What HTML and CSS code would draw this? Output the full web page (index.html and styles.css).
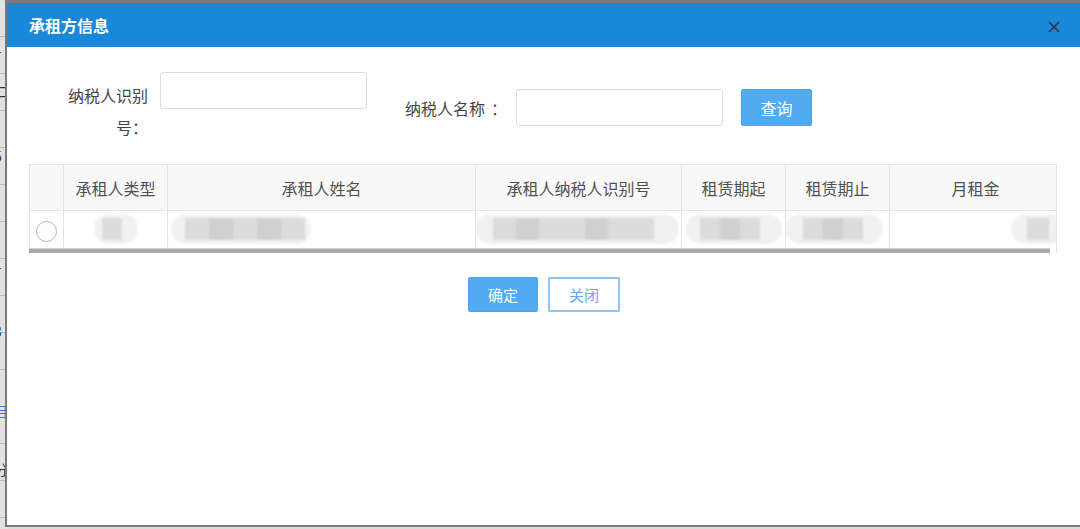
FILE: index.html
```html
<!DOCTYPE html>
<html lang="zh-CN">
<head>
    <meta charset="UTF-8">
    <title>承租方信息</title>
    <link rel="stylesheet" href="styles.css">
</head>
<body>
    <div class="backdrop">
        <span class="ghost g1">1</span>
        <span class="ghost g2">二</span>
        <span class="ghost g3">5</span>
        <span class="ghost g4">1</span>
        <span class="ghost g5">3</span>
        <span class="ghost g6 blue">目</span>
        <span class="ghost g7">分</span>
    </div>

    <div class="dialog">
        <div class="dialog-head">
            <h2>承租方信息</h2>
            <svg class="close" width="12" height="12" viewBox="0 0 12 12">
                <path d="M1 1 L11 11 M11 1 L1 11" stroke="#2b3440" stroke-width="1.6" fill="none"/>
            </svg>
        </div>

        <div class="dialog-body">
            <div class="search-row">
                <div class="field field-top">
                    <label class="lbl lbl-wrap">纳税人识别号：</label>
                    <input class="txt" type="text">
                </div>
                <div class="field field-mid">
                    <label class="lbl">纳税人名称<span class="colon">：</span></label>
                    <input class="txt" type="text">
                    <button class="btn btn-primary btn-search">查询</button>
                </div>
            </div>

            <div class="grid-wrap">
                <table class="grid">
                    <colgroup>
                        <col style="width:34px">
                        <col style="width:104px">
                        <col style="width:308px">
                        <col style="width:206px">
                        <col style="width:104px">
                        <col style="width:104px">
                        <col style="width:172px">
                    </colgroup>
                    <thead>
                        <tr>
                            <th></th>
                            <th>承租人类型</th>
                            <th>承租人姓名</th>
                            <th>承租人纳税人识别号</th>
                            <th>租赁期起</th>
                            <th>租赁期止</th>
                            <th>月租金</th>
                        </tr>
                    </thead>
                    <tbody>
                        <tr>
                            <td class="cell-radio"><span class="radio"></span></td>
                            <td><span class="mask mask-type"><i></i></span></td>
                            <td class="left"><span class="mask mask-name"><i></i><i class="d"></i><i></i><i class="d"></i><i></i></span></td>
                            <td><span class="mask mask-id"><i></i><i class="d"></i><i></i><i></i><i class="d"></i><i></i><i></i></span></td>
                            <td><span class="mask mask-date"><i></i><i class="d"></i><i></i></span></td>
                            <td><span class="mask mask-date2"><i></i><i class="d"></i><i></i></span></td>
                            <td class="right"><span class="mask mask-rent"><i></i></span></td>
                        </tr>
                    </tbody>
                </table>
                <div class="hscroll"></div>
            </div>

            <div class="actions">
                <button class="btn btn-primary">确定</button>
                <button class="btn btn-plain">关闭</button>
            </div>
        </div>
    </div>
</body>
</html>
```

FILE: styles.css
```css
* {
    box-sizing: border-box;
}

body {
    margin: 0;
    width: 1080px;
    height: 529px;
    overflow: hidden;
    background-color: #dcdcdc;
    font-family: "Noto Sans CJK SC", "Microsoft YaHei", sans-serif;
    position: relative;
}

.backdrop {
    position: absolute;
    left: 0;
    top: 0;
    width: 8px;
    height: 529px;
    background: repeating-linear-gradient(#e2e2e2 0, #e2e2e2 36px, #b9b9b9 36px, #b9b9b9 37px);
}

.ghost {
    position: absolute;
    left: -6px;
    font-size: 14px;
    line-height: 14px;
    color: #333;
}

.ghost.blue { color: #3a78c0; }
.g1 { top: 40px; }
.g2 { top: 84px; }
.g3 { top: 149px; }
.g4 { top: 256px; }
.g5 { top: 324px; }
.g6 { top: 404px; }
.g7 { top: 462px; }

.dialog {
    position: absolute;
    left: 5px;
    top: 0;
    width: 1080px;
    height: 527px;
    background-color: #fff;
    border-left: 2px solid #7a7a7a;
    border-top: 3px solid #7a7a7a;
    border-bottom: 2px solid #7a7a7a;
}

.dialog-head {
    height: 44px;
    background-color: #1a88d9;
    display: flex;
    align-items: center;
    justify-content: space-between;
    padding: 0 25px 0 22px;
}

.dialog-head h2 {
    margin: 0;
    font-size: 16px;
    font-weight: bold;
    color: #fff;
    line-height: 20px;
}

.close {
    margin-top: 4px;
}

.dialog-body {
    padding: 25px 22px 0 22px;
}

.search-row {
    display: flex;
    align-items: center;
    padding-left: 35px;
}

.field {
    display: flex;
}

.field-top {
    align-items: flex-start;
}

.field-mid {
    align-items: center;
    margin-left: 38px;
}

.lbl {
    font-size: 16px;
    line-height: 32px;
    color: #444;
    white-space: nowrap;
}

.colon {
    padding-left: 6px;
    margin-right: -6px;
}

.lbl-wrap {
    width: 84px;
    white-space: normal;
    text-align: right;
    margin-top: 7px;
}

.txt {
    width: 207px;
    height: 37px;
    margin-left: 12px;
    border: 1px solid #dcdcdc;
    border-radius: 3px;
    background: #fff;
    outline: none;
}

.field-mid .txt {
    margin-left: 15px;
}

.btn {
    height: 35px;
    width: 70px;
    border-radius: 2px;
    font-family: inherit;
    font-size: 15px;
    cursor: pointer;
    padding: 0;
}

.btn-primary {
    background-color: #52abf1;
    border: 1px solid #4aa5ee;
    color: #fff;
}

.btn-search {
    height: 37px;
    width: 71px;
    margin-left: 18px;
    font-size: 16px;
}

.btn-plain {
    width: 72px;
    background-color: #fff;
    border: 2px solid #8cc4f3;
    color: #62a8ee;
}

.grid-wrap {
    margin-top: 21px;
    width: 1028px;
    overflow: hidden;
    border-right: 1px solid #e4e4e4;
}

.grid {
    border-collapse: collapse;
    table-layout: fixed;
    width: 1032px;
}

.grid th,
.grid td {
    border: 1px solid #e4e4e4;
    padding: 0;
    text-align: center;
    overflow: hidden;
    white-space: nowrap;
}

.grid th {
    height: 46px;
    background-color: #f8f8f8;
    font-size: 16px;
    font-weight: normal;
    color: #505050;
}

.grid td {
    height: 37px;
    border-bottom: none;
}

.grid td.left {
    text-align: left;
}

.grid td.right {
    text-align: right;
}

.radio {
    display: inline-block;
    width: 21px;
    height: 21px;
    border: 1px solid #a9b3c4;
    border-radius: 50%;
    vertical-align: middle;
}

.mask {
    display: inline-flex;
    align-items: center;
    height: 30px;
    border-radius: 15px;
    background-color: #f1f1f1;
    vertical-align: middle;
    filter: blur(1px);
}

.mask i {
    display: block;
    height: 22px;
    width: 20px;
    background-color: #dcdcdc;
}

.mask i.d {
    background-color: #d0d0d0;
}

.mask-type {
    width: 44px;
    padding-left: 8px;
}

.mask-name {
    width: 140px;
    margin-left: 3px;
    padding-left: 14px;
}

.mask-name i {
    width: 24px;
}

.mask-id {
    width: 204px;
    padding-left: 18px;
    margin-left: -4px;
}

.mask-id i {
    width: 23px;
}

.mask-date {
    width: 96px;
    padding-left: 14px;
}

.mask-date2 {
    width: 98px;
    padding-left: 18px;
    margin-left: -8px;
}

.mask-rent {
    width: 54px;
    padding-left: 16px;
    margin-right: -4px;
}

.mask-rent i {
    width: 22px;
}

.hscroll {
    height: 5px;
    background-color: #a9a9a9;
    border-top: 1px solid #cfcfcf;
    margin-right: 6px;
}

.actions {
    display: flex;
    justify-content: center;
    gap: 10px;
    margin-top: 24px;
    padding-right: 4px;
}
```
